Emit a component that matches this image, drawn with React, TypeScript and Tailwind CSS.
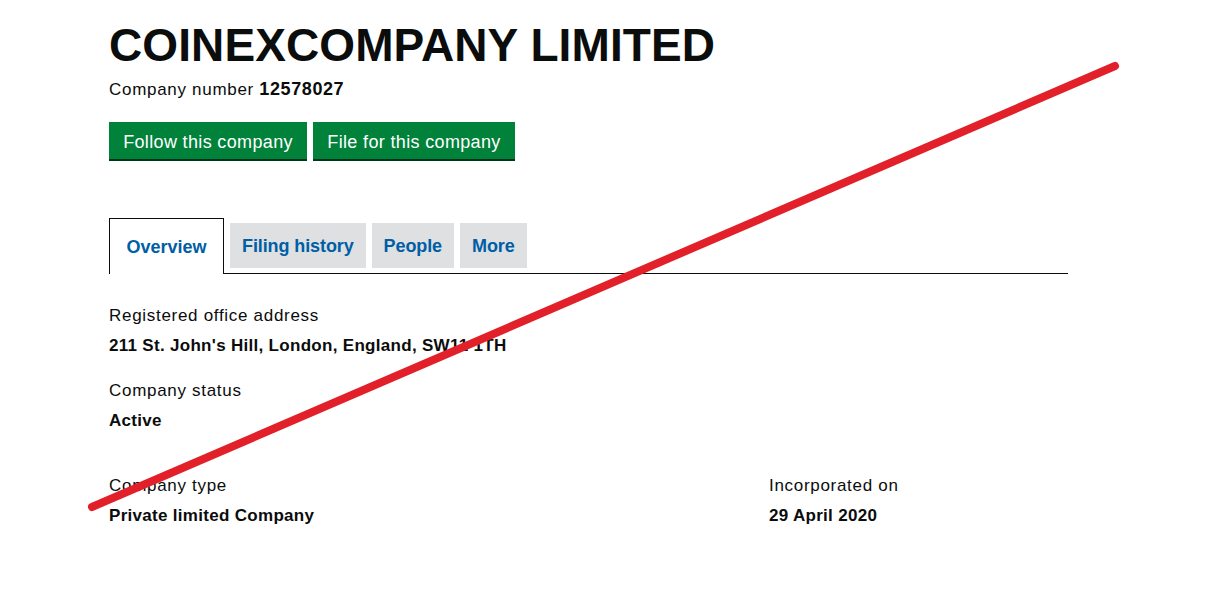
const font = "font-['Liberation_Sans',Arial,sans-serif]";

const tabs = ['Filing history', 'People', 'More'];

function Field({ label, value }: { label: string; value: string }) {
  return (
    <div>
      <p className="text-[17px] leading-[30px] tracking-[0.7px] text-[#0b0c0c]">{label}</p>
      <p className="text-[17px] leading-[30px] tracking-[0.3px] font-bold text-[#0b0c0c]">{value}</p>
    </div>
  );
}

export default function App() {
  return (
    <div className={`relative min-h-[591px] w-full bg-white ${font}`}>
      <div className="w-[959px] ml-[109px] pt-[22px]">
        <h1 className="text-[46px] leading-[46px] font-bold text-[#0b0c0c] tracking-[0.1px]">
          COINEXCOMPANY LIMITED
        </h1>
        <p className="mt-[9px] text-[17px] leading-[24px] tracking-[0.7px] text-[#0b0c0c]">
          Company number <strong className="text-[18px] tracking-[0.6px]">12578027</strong>
        </p>

        <div className="mt-[20px] flex gap-[6px]">
          <button className="h-[39px] w-[198px] pt-[3px] bg-[#00823b] text-white text-[18px] tracking-[0.35px] border-b-2 border-[#003618]">
            Follow this company
          </button>
          <button className="h-[39px] w-[202px] pt-[3px] bg-[#00823b] text-white text-[18px] tracking-[0.35px] border-b-2 border-[#003618]">
            File for this company
          </button>
        </div>

        <div className="mt-[57px] flex items-start gap-[6px] h-[56px] border-b border-[#0b0c0c]">
          <div className="-mb-px h-[56px] w-[115px] pt-[2px] flex items-center justify-center bg-white border-x border-t border-[#0b0c0c] text-[18px] font-bold text-[#005ea5]">
            Overview
          </div>
          {tabs.map((t) => (
            <div
              key={t}
              className="mt-[5px] h-[45px] px-[12px] pt-[2px] flex items-center bg-[#dee0e2] text-[18px] tracking-[-0.1px] font-bold text-[#005ea5]"
            >
              {t}
            </div>
          ))}
        </div>

        <div className="mt-[27px] flex flex-col gap-[15px]">
          <Field label="Registered office address" value="211 St. John's Hill, London, England, SW11 1TH" />
          <Field label="Company status" value="Active" />
        </div>

        <div className="mt-[35px] grid grid-cols-[660px_1fr]">
          <Field label="Company type" value="Private limited Company" />
          <Field label="Incorporated on" value="29 April 2020" />
        </div>
      </div>

      <svg className="absolute inset-0 pointer-events-none" width="1211" height="591">
        <line x1="92" y1="507" x2="1115" y2="66" stroke="#e2202a" strokeWidth="8" strokeLinecap="round" />
      </svg>
    </div>
  );
}
